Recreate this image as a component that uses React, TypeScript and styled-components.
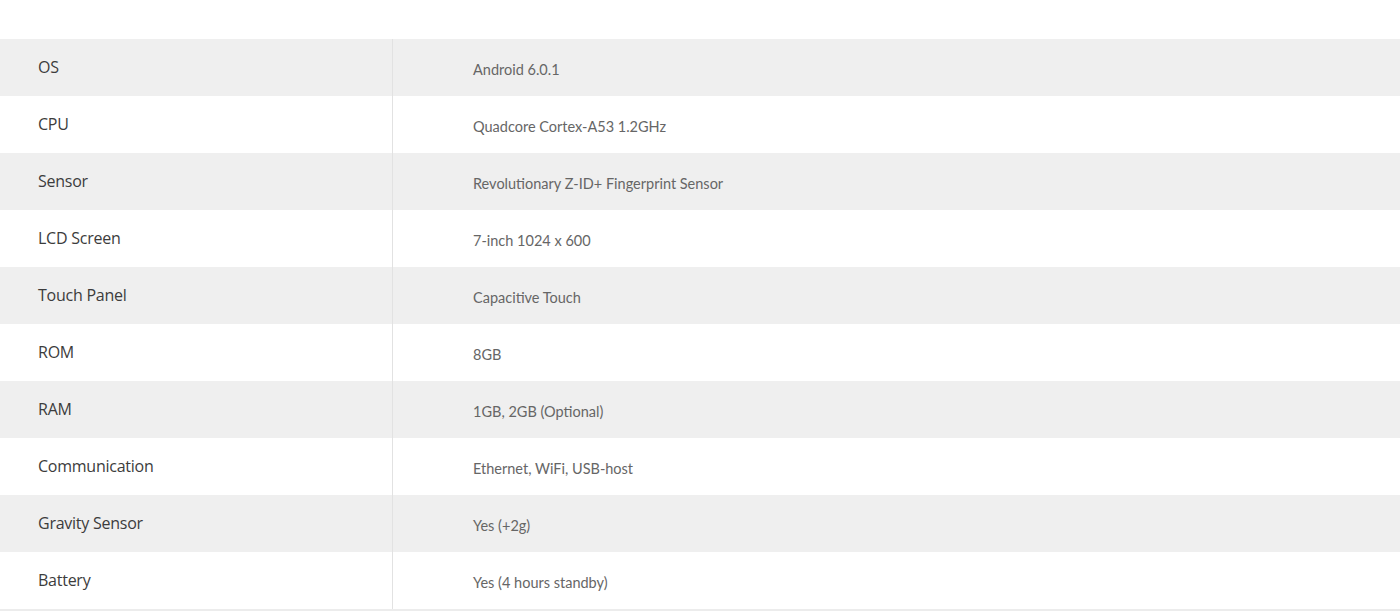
import React from "react";
import styled, { createGlobalStyle } from "styled-components";

const GlobalStyle = createGlobalStyle`
  html, body {
    margin: 0;
    padding: 0;
    background: #ffffff;
  }
`;

const Base = styled.div`
  padding-top: 39px;
  width: 1400px;
`;

const SpecTable = styled.div`
  display: flex;
  flex-direction: column;
  border-bottom: 2px solid #ececec;
`;

const Row = styled.div<{ $shaded: boolean }>`
  display: grid;
  grid-template-columns: 393px 1fr;
  height: 57px;
  background: ${(props) => (props.$shaded ? "#efefef" : "#ffffff")};
`;

const Label = styled.div`
  display: flex;
  align-items: center;
  padding-left: 38px;
  padding-bottom: 2px;
  border-right: 1px solid #e2e2e2;
  font-family: "Open Sans", sans-serif;
  font-size: 16px;
  letter-spacing: -0.25px;
  color: #3c3c3c;
`;

const Value = styled.div`
  display: flex;
  align-items: center;
  padding-left: 80px;
  padding-top: 4px;
  font-family: "Lato", sans-serif;
  font-size: 14.5px;
  color: #666666;
`;

const specs = [
  { label: "OS", value: "Android 6.0.1" },
  { label: "CPU", value: "Quadcore Cortex-A53 1.2GHz" },
  { label: "Sensor", value: "Revolutionary Z-ID+ Fingerprint Sensor" },
  { label: "LCD Screen", value: "7-inch 1024 x 600" },
  { label: "Touch Panel", value: "Capacitive Touch" },
  { label: "ROM", value: "8GB" },
  { label: "RAM", value: "1GB, 2GB (Optional)" },
  { label: "Communication", value: "Ethernet, WiFi, USB-host" },
  { label: "Gravity Sensor", value: "Yes (+2g)" },
  { label: "Battery", value: "Yes (4 hours standby)" },
];

export default function App() {
  return (
    <Base>
      <GlobalStyle />
      <SpecTable>
        {specs.map((spec, index) => (
          <Row key={index} $shaded={index % 2 === 0}>
            <Label>{spec.label}</Label>
            <Value>{spec.value}</Value>
          </Row>
        ))}
      </SpecTable>
    </Base>
  );
}
